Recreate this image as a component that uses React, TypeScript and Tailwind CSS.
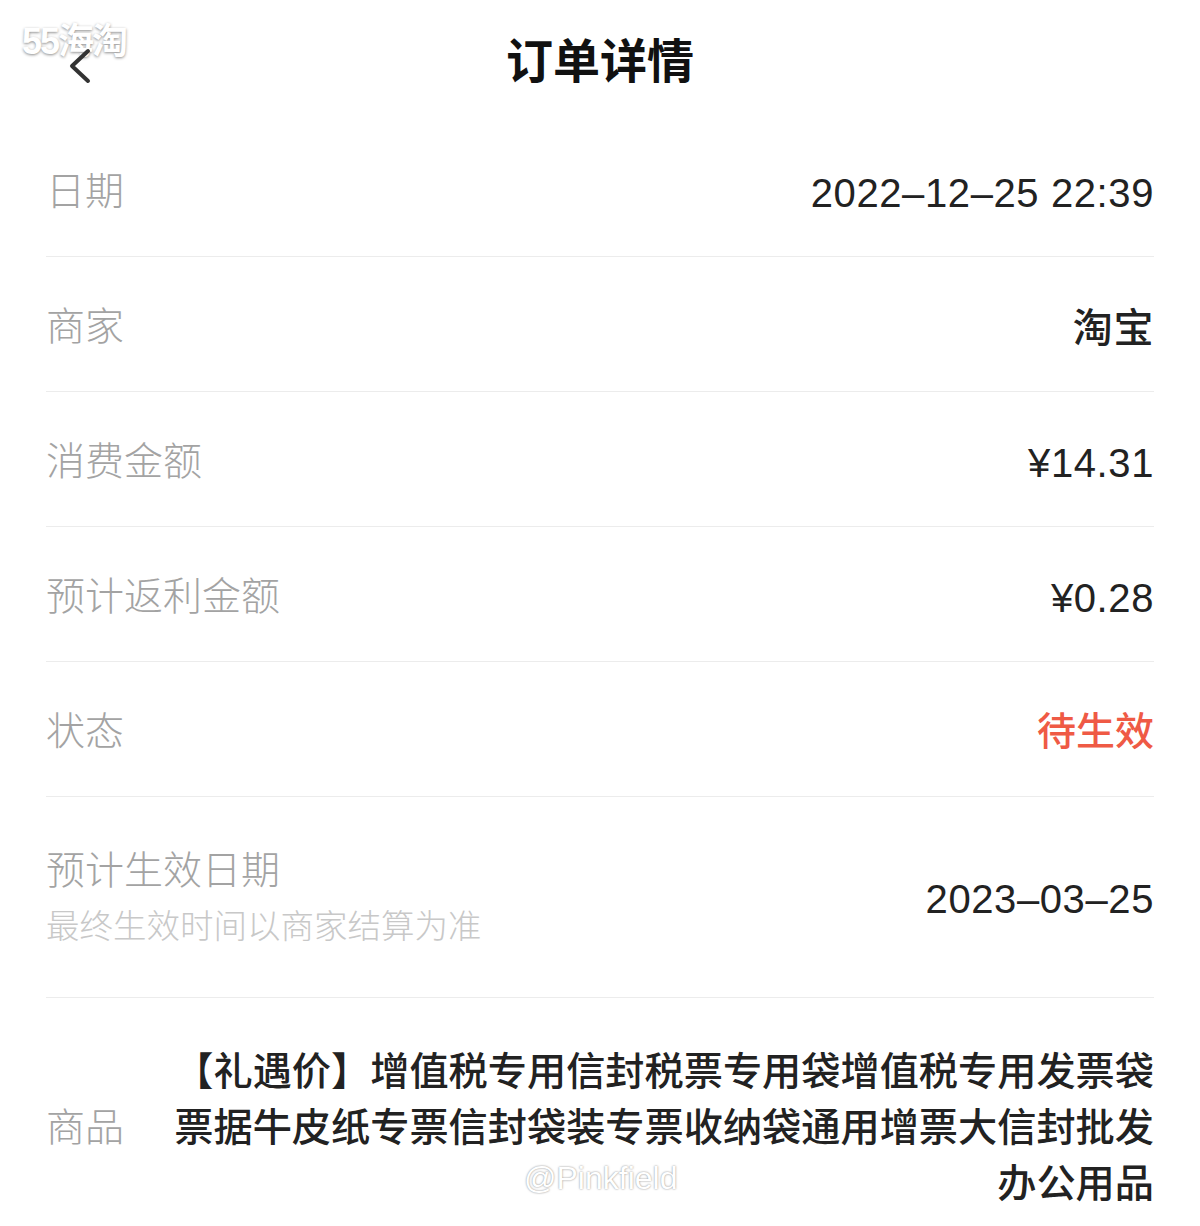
import React from 'react';

const font = {
  fontFamily: '"Liberation Sans", "Noto Sans CJK SC", sans-serif',
};

interface Row {
  label: string;
  value: string;
  red?: boolean;
}

const rows: Row[] = [
  { label: '日期', value: '2022–12–25 22:39' },
  { label: '商家', value: '淘宝' },
  { label: '消费金额', value: '¥14.31' },
  { label: '预计返利金额', value: '¥0.28' },
  { label: '状态', value: '待生效', red: true },
];

const App = () => {
  return (
    <div className="relative w-[1200px] min-h-[1226px] bg-white" style={font}>
      {/* watermark */}
      <div className="absolute left-[22px] top-[24px] text-[36px] font-bold leading-none tracking-[-2px] text-white [text-shadow:0_1px_3px_rgba(0,0,0,0.45)]">
        55海淘
      </div>

      <div className="relative flex h-[122px] items-center justify-center">
        <svg
          className="absolute left-[64px] top-[47px]"
          width="30"
          height="38"
          viewBox="0 0 30 38"
        >
          <path
            d="M24 4 L8 19 L24 34"
            fill="none"
            stroke="#333"
            strokeWidth="4"
            strokeLinecap="round"
            strokeLinejoin="round"
          />
        </svg>
        <h1 className="text-[47px] font-bold text-[#111] leading-none">订单详情</h1>
      </div>

      <div className="px-[46px]">
        {rows.map((row) => (
          <div
            key={row.label}
            className="box-border flex h-[135px] items-center justify-between border-b border-[#ececec] pt-[7px]"
          >
            <span className="text-[39px] font-light text-[#a3a3a3]">{row.label}</span>
            <span
              className={
                row.red
                  ? 'text-[39px] font-medium text-[#ef5a45]'
                  : 'text-[40px] font-medium tracking-[0.6px] text-[#222]'
              }
            >
              {row.value}
            </span>
          </div>
        ))}

        <div className="box-border flex h-[201px] items-center justify-between border-b border-[#ececec] pt-[3px]">
          <div className="flex flex-col">
            <span className="text-[39px] font-light leading-[56px] text-[#a3a3a3]">预计生效日期</span>
            <span className="text-[33.5px] font-light leading-[56px] text-[#c8c8c8]">
              最终生效时间以商家结算为准
            </span>
          </div>
          <span className="text-[40px] font-medium tracking-[0.6px] text-[#222]">2023–03–25</span>
        </div>

        <div className="flex items-center justify-between gap-[48px] pt-[46px] pb-[12px]">
          <span className="shrink-0 text-[39px] font-light text-[#a3a3a3]">商品</span>
          <p className="text-right text-[39.2px] font-medium leading-[56px] text-[#222]">
            【礼遇价】增值税专用信封税票专用袋增值税专用发票袋票据牛皮纸专票信封袋装专票收纳袋通用增票大信封批发办公用品
          </p>
        </div>
      </div>

      <div className="absolute left-[524px] top-[1162px] text-[32px] leading-none text-white [text-shadow:0_0_2px_rgba(0,0,0,0.5)]">
        @Pinkfield
      </div>
    </div>
  );
};

export default App;
